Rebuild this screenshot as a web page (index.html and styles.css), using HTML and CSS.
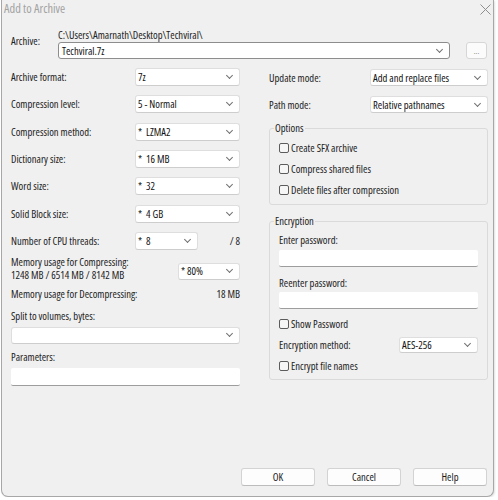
FILE: index.html
```html
<!DOCTYPE html>
<html>
<head>
<meta charset="utf-8">
<title>Add to Archive</title>
<link rel="stylesheet" href="styles.css">
</head>
<body>
<div class="window">
  <div class="titlebar">
    <span class="title">Add to Archive</span>
    <svg class="close" width="11" height="11" viewBox="0 0 11 11"><path d="M0.5 0.5 L10.5 10.5 M10.5 0.5 L0.5 10.5" stroke="#8e8e8e" stroke-width="1" fill="none"/></svg>
  </div>
  <div class="content">
    <div class="archive">
      <span class="archive-label">Archive:</span>
      <div class="archive-main">
        <div class="path">C:\Users\Amarnath\Desktop\Techviral\</div>
        <div class="archive-line">
          <div class="combo combo-archive"><span>Techviral.7z</span></div>
          <div class="dots">...</div>
        </div>
      </div>
    </div>

    <div class="columns">
      <div class="col-left">
        <div class="fields">
          <div class="field"><span>Archive format:</span><div class="combo w105"><span>7z</span></div></div>
          <div class="field"><span>Compression level:</span><div class="combo w105"><span>5 - Normal</span></div></div>
          <div class="field"><span>Compression method:</span><div class="combo w105"><span>*&nbsp; LZMA2</span></div></div>
          <div class="field"><span>Dictionary size:</span><div class="combo w105"><span>*&nbsp; 16 MB</span></div></div>
          <div class="field"><span>Word size:</span><div class="combo w105"><span>*&nbsp; 32</span></div></div>
          <div class="field"><span>Solid Block size:</span><div class="combo w105"><span>*&nbsp; 4 GB</span></div></div>
          <div class="field"><span class="grow">Number of CPU threads:</span><div class="combo w63"><span>*&nbsp; 8</span></div><span class="threads">/ 8</span></div>
        </div>
        <div class="mem">
          <div class="mem-text">
            <div>Memory usage for Compressing:</div>
            <div>1248 MB / 6514 MB / 8142 MB</div>
          </div>
          <div class="combo w62 mem-combo"><span>* 80%</span></div>
        </div>
        <div class="decomp"><span>Memory usage for Decompressing:</span><span>18 MB</span></div>
        <div class="label split-label">Split to volumes, bytes:</div>
        <div class="combo full split-combo"><span></span></div>
        <div class="label params-label">Parameters:</div>
        <div class="textbox params-box"></div>
      </div>

      <div class="col-right">
        <div class="field rfield first"><span>Update mode:</span><div class="combo w118"><span>Add and replace files</span></div></div>
        <div class="field rfield second"><span>Path mode:</span><div class="combo w118"><span>Relative pathnames</span></div></div>

        <fieldset class="group options">
          <legend>Options</legend>
          <div class="check"><span class="box"></span>Create SFX archive</div>
          <div class="check"><span class="box"></span>Compress shared files</div>
          <div class="check"><span class="box"></span>Delete files after compression</div>
        </fieldset>

        <fieldset class="group encryption">
          <legend>Encryption</legend>
          <div class="label enter-label">Enter password:</div>
          <div class="textbox pw1"></div>
          <div class="label reenter-label">Reenter password:</div>
          <div class="textbox pw2"></div>
          <div class="check show-pw"><span class="box"></span>Show Password</div>
          <div class="field enc-method"><span>Encryption method:</span><div class="combo w79"><span>AES-256</span></div></div>
          <div class="check enc-names"><span class="box"></span>Encrypt file names</div>
        </fieldset>
      </div>
    </div>
  </div>

  <div class="buttons">
    <div class="btn">OK</div>
    <div class="btn">Cancel</div>
    <div class="btn">Help</div>
  </div>
</div>
</body>
</html>
```

FILE: styles.css
```css
* { box-sizing: border-box; }

html, body {
  margin: 0;
  padding: 0;
  background: #ffffff;
}

body {
  font-family: "Open Sans", "Liberation Sans", Arial, sans-serif;
  font-stretch: 77%;
  font-weight: 380;
  font-size: 10.6px;
  line-height: 12px;
  color: #222222;
}

.window {
  margin-left: 1px;
  width: 493px;
  height: 497px;
  background: #f0f0f0;
  border: 1px solid #a7a7a7;
  border-top: none;
  border-radius: 0 0 7px 7px;
  box-shadow: 1px 1px 2px rgba(0, 0, 0, 0.12);
  display: flex;
  flex-direction: column;
}

.titlebar {
  height: 18px;
  display: flex;
  align-items: center;
  justify-content: space-between;
  padding: 0 2px 0 2px;
}

.title {
  font-size: 12.4px;
  font-stretch: 76%;
  color: #a2a2a2;
}

.close { display: block; }

.content {
  padding: 0 5px 0 9px;
}

/* archive row */
.archive {
  margin-top: 11px;
  display: flex;
}

.archive-label {
  width: 47px;
  padding-top: 6px;
}

.archive-main {
  flex: 1;
}

.path {
  height: 12px;
  font-stretch: 80%;
}

.archive-line {
  margin-top: 1px;
  display: flex;
  gap: 16px;
  padding-right: 1px;
}

.combo {
  height: 18px;
  background: #ffffff;
  border: 1px solid #dedede;
  border-bottom-color: #cdcdcd;
  border-radius: 3px;
  display: flex;
  align-items: center;
  justify-content: space-between;
  padding-left: 2px;
  color: #111;
  white-space: nowrap;
}

.combo::after {
  content: "";
  width: 4px;
  height: 4px;
  border-right: 1px solid #707070;
  border-bottom: 1px solid #707070;
  transform: rotate(45deg);
  margin: 0 7px 3px 0;
  flex: none;
}

.combo-archive {
  width: 392px;
  height: 17px;
  border-color: #8d8d8d;
  padding-left: 3px;
}

.dots {
  width: 21px;
  height: 17px;
  background: #fbfbfb;
  border: 1px solid #d6d6d6;
  border-radius: 3px;
  color: #8a8a8a;
  font-size: 8px;
  display: flex;
  align-items: center;
  justify-content: center;
}

.w105 { width: 105px; }
.w63 { width: 63px; }
.w62 { width: 62px; }
.w118 { width: 118px; }
.w79 { width: 79px; }
.full { width: 100%; }

/* columns */
.columns {
  margin-top: 9px;
  display: flex;
  gap: 29px;
}

.col-left {
  width: 229px;
  display: flex;
  flex-direction: column;
}

.col-right {
  width: 219px;
  display: flex;
  flex-direction: column;
}

.fields {
  display: flex;
  flex-direction: column;
  gap: 9.33px;
}

.field {
  display: flex;
  align-items: center;
  justify-content: space-between;
}

.grow { flex: 1; }

.threads {
  width: 42px;
  text-align: right;
}

.mem {
  margin-top: 6.5px;
  display: flex;
  justify-content: space-between;
  align-items: flex-start;
}

.mem-text { line-height: 13px; }

.mem-combo {
  margin-top: 6.5px;
  height: 17px;
}

.decomp {
  margin-top: 5.5px;
  display: flex;
  justify-content: space-between;
}

.split-label { margin-top: 10px; }

.split-combo {
  margin-top: 5px;
  height: 17px;
}

.params-label { margin-top: 7px; }

.textbox {
  background: #ffffff;
  border-bottom: 1px solid #9d9d9d;
  border-radius: 2px;
}

.params-box {
  margin-top: 5px;
  height: 18px;
}

/* right column */
.rfield .combo { height: 17px; }
.rfield.first { margin-top: 1px; }
.rfield.second { margin-top: 10px; }

.group {
  margin: 0;
  min-width: 0;
  border: 1px solid #dadada;
  border-radius: 3px;
  padding: 8px 9px 8px 9px;
}

.group legend {
  padding: 0 1px;
  margin-left: -5px;
  line-height: 12px;
}

.options { margin-top: 9px; }

.options .check + .check { margin-top: 9px; }

.check {
  display: flex;
  align-items: center;
  height: 12px;
}

.box {
  width: 10px;
  height: 10px;
  border: 1px solid #5c5c5c;
  border-radius: 2px;
  background: #f6f6f6;
  margin-right: 2px;
  flex: none;
}

.encryption {
  margin-top: 10px;
  padding-top: 7px;
  padding-bottom: 7px;
}

.pw1 {
  margin-top: 4px;
  height: 17px;
}

.reenter-label { margin-top: 10px; }

.pw2 {
  margin-top: 3px;
  height: 17px;
}

.show-pw { margin-top: 9px; }

.enc-method { margin-top: 7px; }

.enc-method .combo { height: 16px; }

.enc-names { margin-top: 7px; }

/* buttons */
.buttons {
  margin-top: auto;
  margin-bottom: 10px;
  padding-right: 6px;
  display: flex;
  justify-content: flex-end;
  gap: 12px;
}

.btn {
  width: 74px;
  height: 18px;
  background: #fdfdfd;
  border: 1px solid #d3d3d3;
  border-bottom-color: #bcbcbc;
  border-radius: 3px;
  display: flex;
  align-items: center;
  justify-content: center;
  color: #1a1a1a;
}
```
